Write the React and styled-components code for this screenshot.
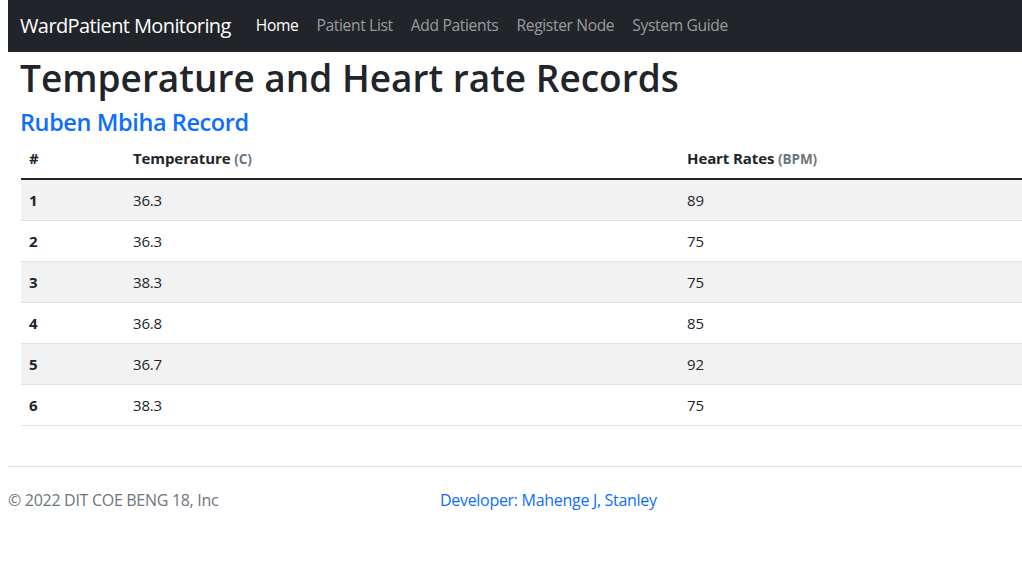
import React from 'react';
import styled, {createGlobalStyle} from 'styled-components';

const GlobalStyle = createGlobalStyle`
  body {
    margin: 0;
    font-family: "Open Sans", "Noto Sans", sans-serif;
    font-size: 16px;
    line-height: 1.5;
    color: #212529;
    background: #fff;
  }
`;

const Page = styled.div`
  padding-left: 8px;
  width: 1100px;
`;

const Navbar = styled.nav`
  display: flex;
  align-items: center;
  height: 52px;
  padding: 0 12px;
  background-color: #212529;
`;

const Brand = styled.a`
  font-size: 20px;
  color: #fff;
  margin-right: 17px;
  letter-spacing: -0.6px;
  text-decoration: none;
`;

const NavLink = styled.a`
  padding: 0 8px;
  margin-right: 2px;
  font-size: 15.6px;
  letter-spacing: -0.35px;
  color: ${p => (p.active ? '#fff' : 'rgba(255,255,255,0.55)')};
  text-decoration: none;
`;

const Main = styled.main`
  padding: 0 12px;
`;

const Title = styled.h1`
  margin: 4px 0 8px;
  font-size: 37px;
  font-weight: 600;
  line-height: 1.2;
  letter-spacing: 0;
`;

const SubTitle = styled.h4`
  margin: 0 0 3px;
  font-size: 23.5px;
  font-weight: 600;
  line-height: 1.2;
  letter-spacing: -0.4px;
  color: #0d6efd;
`;

const Table = styled.table`
  width: 1002px;
  margin-left: 1px;
  border-collapse: collapse;
  font-size: 15px;
  letter-spacing: -0.2px;
`;

const Th = styled.th`
  text-align: left;
  padding: 7px 8px 9px;
  font-weight: 700;
  letter-spacing: -0.1px;
  width: ${p => p.w || 'auto'};
  border-bottom: 2px solid #212529;
`;

const Unit = styled.small`
  font-size: 0.9em;
  color: #6c757d;
`;

const Row = styled.tr`
  background-color: ${p => (p.striped ? '#f2f2f2' : '#fff')};
  border-bottom: 1px solid #dee2e6;
`;

const Td = styled.td`
  padding: 8px;
  height: 24px;
  font-weight: ${p => (p.bold ? 700 : 400)};
`;

const Footer = styled.footer`
  display: grid;
  grid-template-columns: 432px 1fr;
  margin-top: 40px;
  padding-top: 21px;
  border-top: 1px solid #dee2e6;
  width: 1014px;
  font-size: 16px;
  letter-spacing: -0.3px;
`;

const Copy = styled.span`
  color: #6c757d;
`;

const DevLink = styled.a`
  color: #0d6efd;
  text-decoration: none;
`;

const records = [
  {t: '36.3', h: '89'},
  {t: '36.3', h: '75'},
  {t: '38.3', h: '75'},
  {t: '36.8', h: '85'},
  {t: '36.7', h: '92'},
  {t: '38.3', h: '75'},
];

const links = ['Home', 'Patient List', 'Add Patients', 'Register Node', 'System Guide'];

export default function App() {
  return (
    <Page>
      <GlobalStyle />
      <Navbar>
        <Brand href="#">WardPatient Monitoring</Brand>
        {links.map((l, i) => (
          <NavLink key={l} href="#" active={i === 0 ? 1 : 0}>{l}</NavLink>
        ))}
      </Navbar>
      <Main>
        <Title>Temperature and Heart rate Records</Title>
        <SubTitle>Ruben Mbiha Record</SubTitle>
        <Table>
          <thead>
            <tr>
              <Th w="88px">#</Th>
              <Th w="538px">Temperature <Unit>(C)</Unit></Th>
              <Th>Heart Rates <Unit>(BPM)</Unit></Th>
            </tr>
          </thead>
          <tbody>
            {records.map((r, i) => (
              <Row key={i} striped={i % 2 === 0 ? 1 : 0}>
                <Td bold>{i + 1}</Td>
                <Td>{r.t}</Td>
                <Td>{r.h}</Td>
              </Row>
            ))}
          </tbody>
        </Table>
      </Main>
      <Footer>
        <Copy>© 2022 DIT COE BENG 18, Inc</Copy>
        <DevLink href="#">Developer: Mahenge J, Stanley</DevLink>
      </Footer>
    </Page>
  );
}
